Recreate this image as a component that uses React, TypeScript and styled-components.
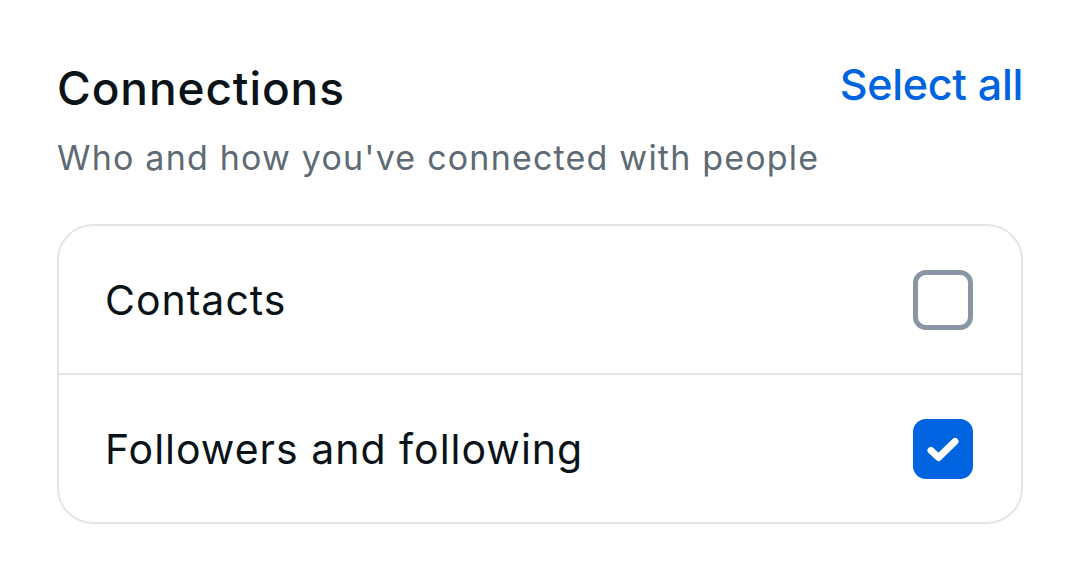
import { useState } from "react";
import styled, { createGlobalStyle } from "styled-components";

const GlobalStyle = createGlobalStyle`
  html, body {
    margin: 0;
    padding: 0;
    background: #ffffff;
  }
  body {
    font-family: Inter, "Noto Sans", "Liberation Sans", sans-serif;
    color: #0a1317;
  }
`;

const Page = styled.div`
  width: 1076px;
  height: 561px;
  box-sizing: border-box;
  padding: 56px 53px 0 57px;
  display: flex;
  flex-direction: column;
`;

const HeaderRow = styled.div`
  display: flex;
  justify-content: space-between;
  align-items: flex-start;
`;

const Heading = styled.h2`
  margin: 0;
  font-size: 46px;
  line-height: 64px;
  font-weight: 500;
  letter-spacing: 0.9px;
  color: #0a1317;
`;

const SelectAll = styled.button`
  border: none;
  background: none;
  padding: 0;
  margin-top: -4px;
  font-family: inherit;
  font-size: 43px;
  line-height: 64px;
  font-weight: 500;
  letter-spacing: -0.3px;
  color: #0064e0;
  cursor: pointer;
`;

const Subtitle = styled.p`
  margin: 16px 0 0;
  font-size: 34px;
  line-height: 44px;
  font-weight: 400;
  letter-spacing: 1.2px;
  color: #5e6a74;
`;

const Card = styled.div`
  margin-top: 44px;
  border: 2px solid #e3e5e8;
  border-radius: 36px;
  overflow: hidden;
  display: flex;
  flex-direction: column;
`;

const Row = styled.label`
  height: 147px;
  display: flex;
  align-items: center;
  justify-content: space-between;
  padding: 0 48px 0 46px;
  cursor: pointer;

  & + & {
    border-top: 2px solid #e3e5e8;
  }
`;

const RowLabel = styled.span`
  font-size: 41px;
  font-weight: 400;
  letter-spacing: 1px;
  color: #0a1317;
`;

const Box = styled.span<{ $checked: boolean }>`
  width: 60px;
  height: 60px;
  box-sizing: border-box;
  border-radius: 13px;
  border: ${(p) => (p.$checked ? "none" : "5px solid #8a96a3")};
  background: ${(p) => (p.$checked ? "#0064e0" : "transparent")};
  display: flex;
  align-items: center;
  justify-content: center;
`;

const items = [
  { id: "contacts", label: "Contacts", checked: false },
  { id: "follow", label: "Followers and following", checked: true },
];

export default function App() {
  const [state, setState] = useState(items);

  const toggle = (id: string) =>
    setState((s) => s.map((i) => (i.id === id ? { ...i, checked: !i.checked } : i)));

  return (
    <>
      <GlobalStyle />
      <Page>
        <HeaderRow>
          <Heading>Connections</Heading>
          <SelectAll onClick={() => setState((s) => s.map((i) => ({ ...i, checked: true })))}>
            Select all
          </SelectAll>
        </HeaderRow>
        <Subtitle>Who and how you've connected with people</Subtitle>
        <Card>
          {state.map((item) => (
            <Row key={item.id} onClick={() => toggle(item.id)}>
              <RowLabel>{item.label}</RowLabel>
              <Box $checked={item.checked}>
                {item.checked && (
                  <svg width="60" height="60" viewBox="0 0 60 60" fill="none">
                    <path
                      d="M18 31.5L25.5 38.5L42 22.5"
                      stroke="#ffffff"
                      strokeWidth="7"
                      strokeLinecap="round"
                      strokeLinejoin="round"
                    />
                  </svg>
                )}
              </Box>
            </Row>
          ))}
        </Card>
      </Page>
    </>
  );
}
